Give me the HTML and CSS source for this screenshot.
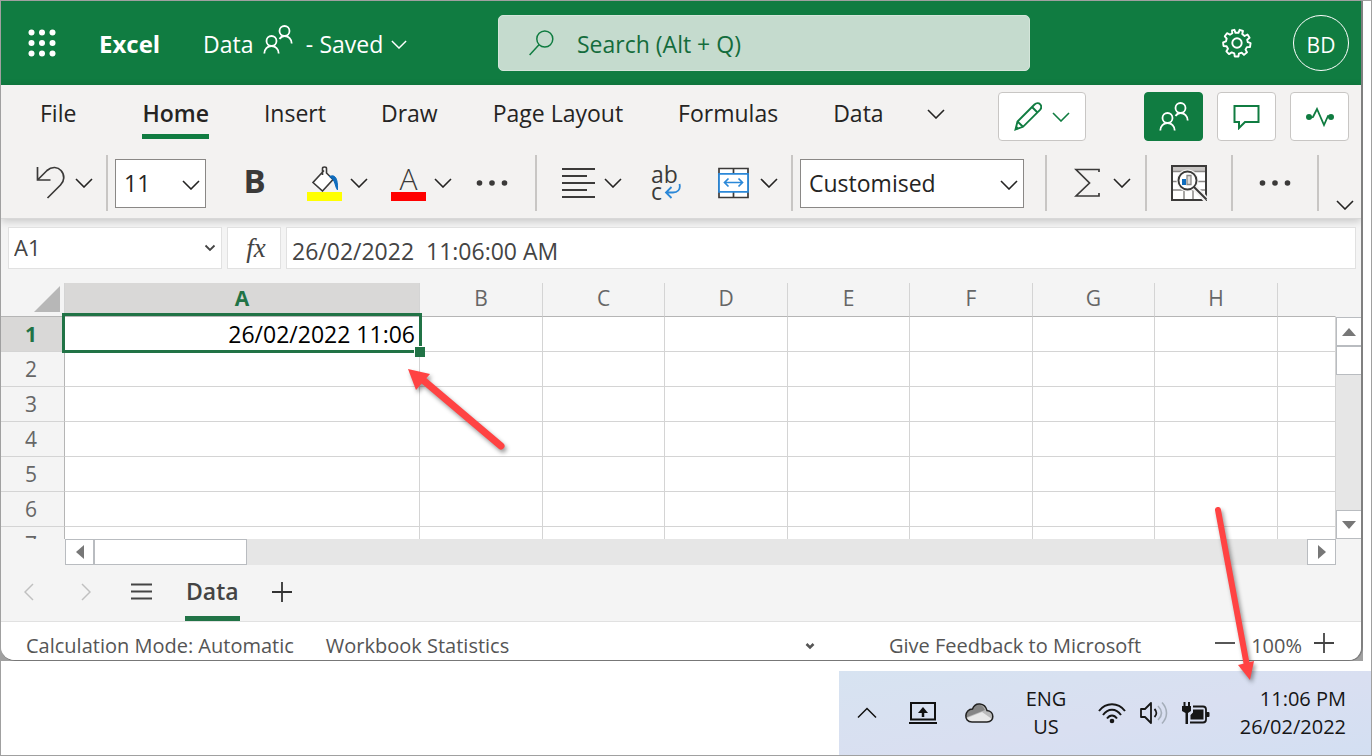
FILE: index.html
```html
<!DOCTYPE html>
<html lang="en-GB">
<head>
<meta charset="utf-8">
<title>Data - Excel</title>
<link rel="stylesheet" href="styles.css">
</head>
<body>
<svg class="defs" aria-hidden="true">
  <symbol id="chev" viewBox="0 0 18 10"><path d="M1 1l8 8 8-8" fill="none" stroke="currentColor" stroke-width="1.6"/></symbol>
  <symbol id="people" viewBox="0 0 30 30"><g fill="none" stroke="currentColor" stroke-width="1.8"><circle cx="8.500" cy="16" r="5"/><path d="M1.300 28.500c0-4.500 3.200-7.500 7.200-7.500s7.200 3 7.200 7.500"/><circle cx="21.500" cy="6" r="5"/><path d="M16.500 14c1.300-2 3-3 5-3 4 0 7.200 3 7.200 7.500"/></g></symbol>
  <symbol id="dots" viewBox="0 0 32 6"><g fill="#3b3a39"><circle cx="3.500" cy="3" r="2.800"/><circle cx="16" cy="3" r="2.800"/><circle cx="28.500" cy="3" r="2.800"/></g></symbol>
</svg>

<div class="window">
<main class="app">
  <header class="titlebar">
    <div class="title-left">
      <button class="waffle" aria-label="App launcher">
        <svg width="28" height="28" viewBox="0 0 28 28"><g fill="#fff"><circle cx="3.500" cy="3.500" r="3"/><circle cx="14" cy="3.500" r="3"/><circle cx="24.500" cy="3.500" r="3"/><circle cx="3.500" cy="14" r="3"/><circle cx="14" cy="14" r="3"/><circle cx="24.500" cy="14" r="3"/><circle cx="3.500" cy="24.500" r="3"/><circle cx="14" cy="24.500" r="3"/><circle cx="24.500" cy="24.500" r="3"/></g></svg>
      </button>
      <span class="brand">Excel</span>
      <button class="doc-name"><span>Data</span><svg class="shared" width="30" height="30"><use href="#people"/></svg><span class="dash">-</span><span>Saved</span><svg class="chev-sm" width="16" height="9"><use href="#chev"/></svg></button>
    </div>
    <label class="search">
      <svg width="25" height="26" viewBox="0 0 25 26"><g fill="none" stroke="#107c41" stroke-width="1.500"><circle cx="15.800" cy="9" r="8"/><path d="M10 14.700L.6 25"/></g></svg>
      <input type="text" placeholder="Search (Alt + Q)" aria-label="Search">
    </label>
    <div class="title-right">
      <button class="gear" aria-label="Settings">
        <svg width="30" height="30" viewBox="-15 -15 30 30"><path fill="none" stroke="#fff" stroke-width="1.900" stroke-linejoin="round" d="M-2.600 -13.200L-1.500 -10.200H1.500L2.600 -13.200L6 -12L5.200 -9L7.600 -7L10.500 -8.500L12.600 -5.300L10.200 -3.300L10.800 -.8L13.600 .2L13 4L9.900 4.100L8.500 6.600L10 9.300L7 11.900L4.700 9.700L1.900 10.600L1.400 13.500H-2.300L-2.700 10.400L-5.300 9.400L-8 11.100L-10.600 8.300L-9 5.700L-10.400 3.300L-13.500 3L-13.900 -.6L-11 -1.700L-10.300 -4.400L-12.200 -6.700L-10 -9.800L-7 -8.300L-4.700 -9.700L-5 -12.600Z"/><circle r="4.700" fill="none" stroke="#fff" stroke-width="1.900"/></svg>
      </button>
      <button class="avatar" aria-label="Account">BD</button>
    </div>
  </header>

  <section class="ribbon">
    <div class="tabs-row">
      <nav class="tabs">
        <button class="tab tab-file">File</button>
        <button class="tab active">Home</button>
        <button class="tab">Insert</button>
        <button class="tab">Draw</button>
        <button class="tab">Page Layout</button>
        <button class="tab">Formulas</button>
        <button class="tab">Data</button>
        <button class="more" aria-label="More tabs"><svg width="18" height="10"><use href="#chev"/></svg></button>
      </nav>
      <div class="actions">
        <button class="action edit" aria-label="Editing mode">
          <svg width="28" height="29" viewBox="0 0 28 29"><g fill="none" stroke="#107c41" stroke-width="1.900"><path d="M1.500 27.500L3.500 19.500L20.500 2.500C22.500.5 25 1 26 2.200C27.500 3.800 27.700 6 26 7.800L9 24.800Z"/><path d="M18 5l5.500 5.500M3.500 19.500l5.500 5.300"/></g><path d="M1 28l1.200-4.500 3.200 3.200z" fill="#107c41"/></svg>
          <svg width="18" height="10"><use href="#chev"/></svg>
        </button>
        <button class="action share" aria-label="Share"><svg width="30" height="30"><use href="#people"/></svg></button>
        <button class="action" aria-label="Comments"><svg width="27" height="26" viewBox="0 0 27 26"><path d="M1.500 2H25.500V18H12L6 24V18H1.500Z" fill="none" stroke="#107c41" stroke-width="2"/></svg></button>
        <button class="action" aria-label="Activity"><svg width="28" height="20" viewBox="0 0 28 20"><circle cx="3" cy="10" r="3" fill="#107c41"/><circle cx="25" cy="10" r="3" fill="#107c41"/><path d="M4 11l3-1 4-8 7 16 4-9 3 1" fill="none" stroke="#107c41" stroke-width="1.800"/></svg></button>
      </div>
    </div>

    <div class="tools">
      <div class="group g-undo">
        <button class="tool" aria-label="Undo"><svg width="29" height="34" viewBox="0 0 29 34"><path d="M1.500 1V14H14.500M1.500 14L11 4.500C16 0 22 1 25 4.500C29 9 28.500 15 24.500 19L11.500 32" fill="none" stroke="#3b3a39" stroke-width="1.700"/></svg><svg width="18" height="10"><use href="#chev"/></svg></button>
      </div>
      <div class="group g-font">
        <label class="pick"><select aria-label="Font size"><option>11</option></select><svg width="18" height="10"><use href="#chev"/></svg></label>
        <button class="tool bold">B</button>
        <button class="tool paint" aria-label="Fill colour"><span class="swatch yellow"><svg width="28" height="26" viewBox="0 0 28 26"><path d="M13 4.500L2 16.500L11.500 25L22 13.500L15.500 7V2.500C15.500 .5 11.500 .5 11.500 2.500V9" fill="#fff" stroke="#3b3a39" stroke-width="1.600"/><path d="M19 10.500L23 14" stroke="#3b3a39" stroke-width="1.500"/><path d="M18.500 10.500C24 8 27 12 26.500 24C23.500 20 25 14.500 18.500 10.500Z" fill="#0f6cbd" stroke="#0f6cbd"/></svg></span><svg width="18" height="10"><use href="#chev"/></svg></button>
        <button class="tool paint" aria-label="Font colour"><span class="swatch red"><span class="letter">A</span></span><svg width="18" height="10"><use href="#chev"/></svg></button>
        <button class="tool" aria-label="More font options"><svg width="32" height="6"><use href="#dots"/></svg></button>
      </div>
      <div class="group g-align">
        <button class="tool align" aria-label="Alignment"><svg width="33" height="32" viewBox="0 0 33 32"><path d="M0 2H33M0 9H25M0 16H33M0 23H25M0 30H33" stroke="#3b3a39" stroke-width="1.800"/></svg><svg width="18" height="10"><use href="#chev"/></svg></button>
        <button class="tool wrap" aria-label="Wrap text"><span>ab</span><span>c<svg width="17" height="17" viewBox="0 0 17 17"><path d="M15.500 1C17 7 13 9.500 9 9.500H2M7.500 4L2 9.500L7.500 15" fill="none" stroke="#2b88d8" stroke-width="1.800"/></svg></span></button>
        <button class="tool merge" aria-label="Merge cells"><svg width="31" height="32" viewBox="0 0 31 32"><g fill="#fff" stroke="#3b3a39" stroke-width="1.700"><path d="M1 1.500H30V30.500H1Z"/><path d="M15.500 1v6M15.500 25v6"/></g><path d="M1 6.800H30V24.800H1Z" fill="#fff" stroke="#2b88d8" stroke-width="1.800"/><path d="M7 15.500H24M10.500 11.500L6.500 15.500L10.500 19.500M20.500 11.500L24.500 15.500L20.500 19.500" fill="none" stroke="#2b88d8" stroke-width="1.700"/></svg><svg width="18" height="10"><use href="#chev"/></svg></button>
      </div>
      <div class="group g-number">
        <label class="pick"><select aria-label="Number format"><option>Customised</option></select><svg width="18" height="10"><use href="#chev"/></svg></label>
      </div>
      <div class="group g-sum">
        <button class="tool wide-gap" aria-label="AutoSum"><svg width="27" height="30" viewBox="0 0 27 30"><path d="M25 4V1.500H2L15.500 15L2 28H25V25" fill="none" stroke="#3b3a39" stroke-width="1.700"/></svg><svg width="18" height="10"><use href="#chev"/></svg></button>
      </div>
      <div class="group g-center">
        <button class="tool" aria-label="Analyse data"><svg width="36" height="36" viewBox="0 0 36 36"><path d="M1 1H35V35H1Z" fill="#fff" stroke="#3b3a39" stroke-width="2"/><path d="M2 2H34V6H2Z" fill="#c8c6c4"/><path d="M2 6.500H34M2 16.500H34M2 25H34M13 25V34M22 25V34" stroke="#8a8886" stroke-width="1.500"/><path d="M23 22L35.500 35" stroke="#f3f2f1" stroke-width="6"/><circle cx="16.500" cy="15.500" r="11" fill="#f3f2f1"/><circle cx="16.500" cy="15.500" r="9" fill="#fff" stroke="#3b3a39" stroke-width="1.900"/><path d="M11 14h4v6h-4z" fill="#0f6cbd"/><path d="M16 10.500h4v9h-4z" fill="#e1dfdd" stroke="#8a8886" stroke-width="1.300"/><path d="M23 22L35.500 34.500" stroke="#3b3a39" stroke-width="2"/></svg></button>
      </div>
      <div class="group g-center">
        <button class="tool" aria-label="More commands"><svg width="32" height="6"><use href="#dots"/></svg></button>
      </div>
      <div class="group g-end">
        <button class="tool" aria-label="Ribbon display options"><svg width="18" height="10"><use href="#chev"/></svg></button>
      </div>
    </div>
  </section>

  <section class="formula-bar">
    <label class="name-box"><input type="text" value="A1" aria-label="Name box"><svg width="12" height="8" viewBox="0 0 12 8"><path d="M1.500 1.500L6 6L10.500 1.500" fill="none" stroke="#444" stroke-width="1.800"/></svg></label>
    <button class="fx" aria-label="Insert function">fx</button>
    <input class="formula" type="text" value="26/02/2022  11:06:00 AM" aria-label="Formula">
  </section>

  <section class="sheet">
    <div class="grid-clip">
      <table class="cells">
        <colgroup><col class="c-row"><col class="c-a"><col class="c-odd"><col class="c-even"><col class="c-odd"><col class="c-even"><col class="c-odd"><col class="c-even"><col class="c-odd"><col></colgroup>
        <thead><tr><th class="corner"><svg width="26" height="26" viewBox="0 0 26 26"><path d="M26 0V26H0Z" fill="#b7b7b7"/></svg></th><th class="sel">A</th><th>B</th><th>C</th><th>D</th><th>E</th><th>F</th><th>G</th><th>H</th><th></th></tr></thead>
        <tbody>
          <tr><th class="sel">1</th><td class="current">26/02/2022 11:06<span class="handle"></span></td><td></td><td></td><td></td><td></td><td></td><td></td><td></td><td></td></tr>
          <tr><th>2</th><td></td><td></td><td></td><td></td><td></td><td></td><td></td><td></td><td></td></tr>
          <tr><th>3</th><td></td><td></td><td></td><td></td><td></td><td></td><td></td><td></td><td></td></tr>
          <tr><th>4</th><td></td><td></td><td></td><td></td><td></td><td></td><td></td><td></td><td></td></tr>
          <tr><th>5</th><td></td><td></td><td></td><td></td><td></td><td></td><td></td><td></td><td></td></tr>
          <tr><th>6</th><td></td><td></td><td></td><td></td><td></td><td></td><td></td><td></td><td></td></tr>
          <tr><th>7</th><td></td><td></td><td></td><td></td><td></td><td></td><td></td><td></td><td></td></tr>
        </tbody>
      </table>
    </div>
    <div class="vscroll">
      <button aria-label="Scroll up"><svg width="14" height="8"><path d="M7 0l7 8H0z" fill="#777"/></svg></button>
      <div class="vthumb"></div>
      <div class="track"></div>
      <button aria-label="Scroll down"><svg width="14" height="8"><path d="M7 8l7-8H0z" fill="#777"/></svg></button>
    </div>
  </section>
  <div class="hscroll">
    <button aria-label="Scroll left"><svg width="8" height="14"><path d="M0 7l8-7v14z" fill="#777"/></svg></button>
    <div class="hthumb"></div>
    <div class="track"></div>
    <button aria-label="Scroll right"><svg width="8" height="14"><path d="M8 7L0 0v14z" fill="#777"/></svg></button>
  </div>

  <nav class="sheet-tabs">
    <button class="nav-prev" aria-label="Previous sheet"><svg width="10" height="18" viewBox="0 0 10 18"><path d="M9 1L1 9l8 8" fill="none" stroke="#c0c0c0" stroke-width="1.500"/></svg></button>
    <button class="nav-next" aria-label="Next sheet"><svg width="10" height="18" viewBox="0 0 10 18"><path d="M1 1l8 8-8 8" fill="none" stroke="#c0c0c0" stroke-width="1.500"/></svg></button>
    <button class="nav-all" aria-label="All sheets"><svg width="21" height="17" viewBox="0 0 21 17"><path d="M0 1.500H21M0 8.500H21M0 15.500H21" stroke="#444" stroke-width="1.800"/></svg></button>
    <button class="sheet-tab">Data</button>
    <button class="nav-add" aria-label="New sheet"><svg width="20" height="20" viewBox="0 0 20 20"><path d="M0 10H20M10 0V20" stroke="#333" stroke-width="1.800"/></svg></button>
  </nav>

  <footer class="status">
    <span>Calculation Mode: Automatic</span>
    <span class="stats">Workbook Statistics</span>
    <svg class="status-chev" width="10" height="7"><path d="M1.500 1L5 4.500L8.500 1" fill="none" stroke="#555" stroke-width="2.500"/></svg>
    <a class="feedback" href="#">Give Feedback to Microsoft</a>
    <button aria-label="Zoom out"><svg width="20" height="20" viewBox="0 0 20 20"><path d="M0 10H20" stroke="#444" stroke-width="1.800"/></svg></button>
    <span class="zoom">100%</span>
    <button aria-label="Zoom in"><svg width="20" height="20" viewBox="0 0 20 20"><path d="M0 10H20M10 0V20" stroke="#444" stroke-width="1.800"/></svg></button>
  </footer>
</main>
</div>

<aside class="tray">
  <button aria-label="Hidden icons"><svg width="20" height="12" viewBox="0 0 20 12"><path d="M1 10.500L10 1.500L19 10.500" fill="none" stroke="#111" stroke-width="1.500"/></svg></button>
  <svg class="cast" width="28" height="24" viewBox="0 0 28 24"><g fill="none" stroke="#111" stroke-width="2"><path d="M2 2H26V18.500H2Z"/><path d="M0 22H28"/><path d="M14 9V16" stroke-width="2.500"/></g><path d="M14 6L19 12H9Z" fill="#111"/></svg>
  <svg width="30" height="22" viewBox="0 0 30 22"><path d="M8 20H23C31 20 30.500 9 23 8.500C21 .5 11 -.5 8.500 7C.5 7-1 20 8 20Z" fill="#bbb"/><path d="M2 15.500L21 8C18 1 11 1 8.500 7C4 7 1 11 2 15.500Z" fill="#858585"/><path d="M3 16L18 10L28 17C27 19 25 20 23 20H8C6 20 4 19 3 16Z" fill="#e8e8e8"/><path d="M8 20H23C31 20 30.500 9 23 8.500C21 .5 11 -.5 8.500 7C.5 7-1 20 8 20Z" fill="none" stroke="#222" stroke-width="1.500"/></svg>
  <div class="lang">ENG<br>US</div>
  <svg width="28" height="21" viewBox="0 0 28 21"><g fill="none" stroke="#161616" stroke-width="2"><path d="M1 8C8-1 20-1 27 8M5 12C10 5 18 5 23 12M9 15.500C12 11.500 16 11.500 19 15.500"/></g><circle cx="14" cy="18" r="2.300" fill="#161616"/></svg>
  <svg width="28" height="24" viewBox="0 0 28 24"><path d="M1 8H5L11 2V22L5 16H1Z" fill="none" stroke="#161616" stroke-width="1.800" stroke-linejoin="round"/><path d="M14.500 8C17 10.500 17 13.500 14.500 16" fill="none" stroke="#161616" stroke-width="1.800"/><path d="M18 5C22.500 9.500 22.500 14.500 18 19M22 1.500C28 8 28 16 22 22.500" fill="none" stroke="#a5aeba" stroke-width="1.600"/></svg>
  <svg width="28" height="23" viewBox="0 0 28 23"><path d="M0 4H9V9L6 11V22H3.500V11L0 9ZM1.500 0h2v5h-2zM6 0h2v5H6z" fill="#161616"/><path d="M11 4.500H21C23 4.500 24 5.500 24 7.500V17.500C24 19.500 23 20.500 21 20.500H8" fill="none" stroke="#161616" stroke-width="1.800"/><path d="M11 7.500H21.500V17.500H8.500V13L11 10.500ZM24 10h2.500q1 0 1 1v3q0 1-1 1H24z" fill="#161616"/></svg>
  <div class="clock">11:06 PM<br>26/02/2022</div>
</aside>

<svg class="arrow arrow-cell" width="112" height="100" viewBox="0 0 112 100" aria-hidden="true"><path d="M100 83L22 17" stroke="#ff4343" stroke-width="7" stroke-linecap="round"/><path d="M7 6L29 11L15 27Z" fill="#ff4343"/></svg>
<svg class="arrow arrow-clock" width="64" height="190" viewBox="0 0 64 190" aria-hidden="true"><path d="M17 9L46 165" stroke="#ff4343" stroke-width="6" stroke-linecap="round"/><path d="M49 179L37 164L53 160Z" fill="#ff4343"/></svg>
</body>
</html>
```
FILE: styles.css
```css
* { box-sizing: border-box; }

body {
  margin: 0;
  min-height: 100vh;
  border: 1px solid #a0a0a0;
  background: #fff;
  color: #252423;
  font: 23px/32px "Open Sans", "Noto Sans", sans-serif;
  position: relative;
}

svg { display: block; flex: none; }
.defs { position: absolute; width: 0; height: 0; }

button, input, select {
  font: inherit;
  color: inherit;
  border: 0;
  margin: 0;
  padding: 0;
  background: none;
  border-radius: 0;
}
button { display: flex; align-items: center; }

.window { margin-right: 8px; background: #a0a0a0; }
.app {
  border-right: 2px solid #808080;
  border-bottom: 1px solid #777;
  border-radius: 0 0 14px 14px;
  background: #f4f4f4;
  overflow: hidden;
}

/* Title bar */
.titlebar {
  display: flex;
  align-items: center;
  height: 84px;
  background: #107c41;
  color: #fff;
}
.title-left { display: flex; align-items: center; width: 497px; padding-left: 27px; }
.brand { font-weight: 700; font-size: 24px; margin-left: 43px; width: 104px; padding-top: 2px; }
.doc-name { padding-top: 2px; }
.shared { margin: 0 6px 8px 10px; }
.dash { width: 20px; }
.chev-sm { margin-left: 8px; }
.search {
  display: flex;
  align-items: center;
  gap: 23px;
  width: 532px;
  height: 56px;
  padding-left: 30px;
  border: 1px solid #d4e5da;
  border-radius: 5px;
  background: #c5dbce;
}
.search input { flex: 1; min-width: 0; padding-top: 2px; outline: 0; }
.search input::placeholder { color: #146c3c; opacity: 1; }
.title-right {
  flex: 1;
  display: flex;
  justify-content: flex-end;
  align-items: center;
  gap: 41px;
  padding-right: 12px;
}
.avatar {
  width: 56px;
  height: 56px;
  padding-top: 3px;
  justify-content: center;
  border: 1px solid #fff;
  border-radius: 50%;
  font-size: 21px;
}

/* Ribbon */
.ribbon { background: #f3f2f1; border-bottom: 1px solid #d8d8d8; box-shadow: 0 2px 8px #0003; }
.tabs-row { display: flex; justify-content: space-between; padding: 7px 12px 0 39px; }
.tabs { display: flex; gap: 55px; height: 56px; }
.tab { height: 47px; padding-bottom: 1px; border-bottom: 5px solid transparent; }
.tab-file { margin-right: 11px; }
.tab.active { border-color: #107c41; font-weight: 600; }
.more { height: 44px; margin-left: -12px; }
.actions { display: flex; gap: 14px; }
.action {
  width: 59px;
  height: 49px;
  justify-content: center;
  border: 1px solid #c8c6c4;
  border-radius: 4px;
  background: #fff;
  color: #107c41;
}
.edit { width: 88px; gap: 10px; margin-right: 44px; }
.share { border-color: #107c41; background: #107c41; color: #fff; }

.tools { display: flex; height: 70px; padding: 7px 0; }
.group { display: flex; align-items: center; height: 56px; border-left: 2px solid #c8c6c4; }
.tool { height: 49px; gap: 10px; justify-content: center; }
.wide-gap { gap: 12px; }
.g-undo { width: 105px; border: 0; padding-left: 35px; }
.g-font { display: grid; grid-template-columns: 91px 97px 84px 84px 41px; width: 429px; padding-left: 7px; }
.g-align { display: grid; grid-template-columns: 71px 74px 90px; width: 256px; padding-left: 21px; }
.g-number { width: 254px; padding-left: 7px; }
.g-number .pick { width: 224px; }
.g-sum { width: 100px; padding-left: 27px; }
.g-center { justify-content: center; width: 86px; }
.g-end { flex: 1; align-items: flex-end; padding-left: 17px; }
.g-end .tool { height: 12px; }
.pick { position: relative; display: block; height: 49px; border: 1px solid #8a8886; background: #fff; }
.pick select { width: 100%; height: 100%; padding-left: 8px; appearance: none; }
.pick svg { position: absolute; right: 5px; top: 20px; pointer-events: none; }
.bold { padding-bottom: 4px; font-size: 33px; font-weight: 700; color: #3b3a39; }
.paint { gap: 8px; justify-content: flex-start; padding-left: 4px; }
.swatch {
  display: flex;
  justify-content: center;
  align-items: flex-start;
  width: 35px;
  height: 35px;
  border-bottom: 9px solid;
}
.yellow { border-color: #ff0; }
.red { border-color: #f00; }
.letter { font-size: 30px; line-height: 26px; font-weight: 300; color: #3b3a39; }
.align { gap: 9px; justify-content: flex-start; padding-left: 4px; }
.wrap { flex-direction: column; align-items: flex-start; gap: 0; padding-left: 22px; line-height: 17px; color: #3b3a39; }
.wrap span { display: flex; gap: 2px; }
.merge { gap: 11px; justify-content: flex-end; padding-right: 15px; }

/* Formula bar */
.formula-bar { display: flex; gap: 5px; padding: 8px 5px 14px 7px; }
.name-box, .fx, .formula { height: 42px; border: 1px solid #e1e1e1; background: #fff; color: #444; }
.name-box { display: flex; align-items: center; width: 214px; padding: 0 5px; }
.name-box input { flex: 1; min-width: 0; padding-bottom: 2px; font-size: 22px; }
.fx { width: 54px; padding-left: 4px; justify-content: center; font: italic 27px "Liberation Serif", serif; }
.formula { flex: 1; min-width: 0; padding: 5px 0 0 5px; }

/* Cell grid */
.sheet { display: flex; height: 256px; }
.grid-clip { flex: 1; overflow: hidden; }
.cells { width: 100%; table-layout: fixed; border-collapse: separate; border-spacing: 0; }
.c-row { width: 64px; }
.c-a { width: 355px; }
.c-odd { width: 123px; }
.c-even { width: 122px; }
.cells th, .cells td { height: 35px; padding: 0; border: solid #d4d4d4; border-width: 0 1px 1px 0; }
.cells th { background: #f4f4f4; color: #666; font-size: 21px; line-height: 30px; font-weight: 400; }
.cells thead th { height: 34px; padding-bottom: 3px; border-bottom-color: #b5b5b5; }
.cells thead th:last-child { border-right-color: #f4f4f4; }
.cells tbody th { padding-right: 3px; border-right-color: #b5b5b5; }
.cells th.sel { background: #d9d8d7; color: #217346; font-weight: 700; }
.corner svg { margin: 2px 0 0 33px; }
.cells td { background: #fff; }
.cells td.current {
  position: relative;
  padding-right: 4px;
  color: #000;
  text-align: right;
  line-height: 32px;
}
.current::after { content: ""; position: absolute; inset: -4px -3px -2px -3px; border: 3px solid #217346; }
.handle { position: absolute; z-index: 1; right: -6px; bottom: -6px; width: 11px; height: 11px; border: solid #fff; border-width: 1px 0 0 1px; background: #217346; }

.vscroll { display: flex; flex-direction: column; width: 25px; padding-top: 34px; }
.vscroll button, .hscroll button, .vthumb, .hthumb { border: 1px solid #b9bcc0; background: #fff; justify-content: center; }
.vscroll button { height: 29px; border-right: 0; }
.vthumb { height: 29px; border-right: 0; }
.track { flex: 1; background: #e6e6e6; }
.hscroll { display: flex; height: 26px; margin: 0 25px 0 64px; }
.hscroll button { width: 29px; }
.hthumb { width: 153px; }

/* Sheet tabs */
.sheet-tabs { display: flex; align-items: stretch; height: 57px; padding: 0 23px; border-bottom: 1px solid #e1e1e1; color: #444; }
.sheet-tabs button { padding-bottom: 3px; }
.nav-next { margin-left: 47px; }
.nav-all { margin-left: 40px; }
.sheet-tabs .sheet-tab { margin-left: 33px; padding: 0 1px; border-bottom: 5px solid #217346; font-weight: 600; }
.nav-add { margin-left: 32px; }

/* Status bar */
.status { display: flex; align-items: center; height: 38px; padding: 10px 27px 0 25px; background: #fff; color: #555; font-size: 20px; }
.stats { margin-left: 32px; }
.status-chev { margin-left: auto; }
.feedback { margin: 0 74px; color: inherit; text-decoration: none; }
.status button { padding-bottom: 6px; }
.zoom { margin: 0 12px 0 16px; }

/* System tray */
.tray {
  display: flex;
  align-items: center;
  width: 532px;
  height: 84px;
  margin: 10px 0 0 auto;
  padding: 0 25px 0 18px;
  gap: 14px;
  background: linear-gradient(170deg, #d7e3f1, #d9dff1 55%, #d3dff2);
  color: #161616;
  font-size: 20px;
  line-height: 28px;
}
.tray > button { margin-right: 18px; }
.cast { margin-right: 13px; }
.lang { width: 76px; text-align: center; }
.clock { flex: 1; text-align: right; }

/* Callout arrows */
.arrow { position: absolute; pointer-events: none; filter: drop-shadow(2px 3px 2px #0006); fill: none; }
.arrow-cell { left: 400px; top: 362px; }
.arrow-clock { left: 1200px; top: 500px; }
```
